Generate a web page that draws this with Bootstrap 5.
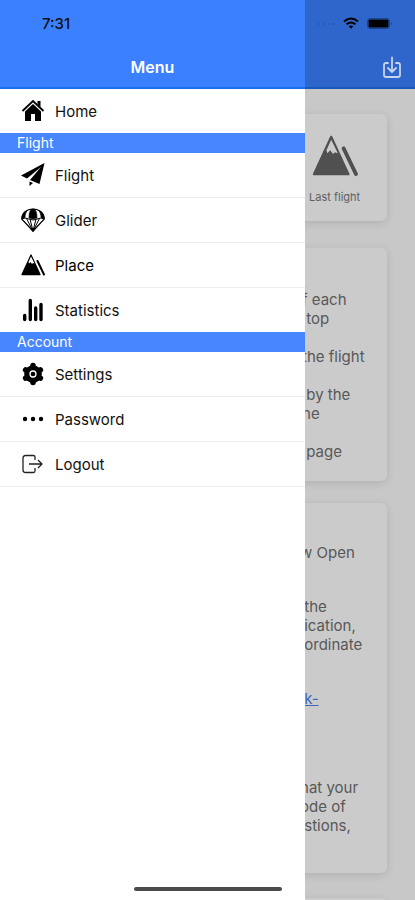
<!DOCTYPE html>
<html lang="en">
<head>
<meta charset="utf-8">
<meta name="viewport" content="width=device-width, initial-scale=1">
<title>Menu</title>
<link href="https://cdn.jsdelivr.net/npm/bootstrap@5.3.0/dist/css/bootstrap.min.css" rel="stylesheet">
<style>
  body { font-family: Inter, "Liberation Sans", sans-serif; font-size: 15px; line-height: 19px; color: #111; }
  .drawer { width: 73.5%; }
  .app-head { height: 89px; background: #3a80ff; border-bottom: 2px solid #1a6ff0; }
  .status { height: 46px; }
  .clock { padding-left: 42px; font-size: 15px; }
  .title { font-size: 16px; line-height: 42px; }
  .entry { height: 44px; padding-left: 21px; gap: 10px; color: #111; font-size: 15px; }
  .entry svg { width: 24px; height: 24px; }
  li + li { border-top: 1px solid #eee; }
  .ruled-end { border-bottom: 1px solid #eee; }
  .group { height: 20px; line-height: 20px; padding-left: 17px; font-size: 14px; background: #4886ff; }
  .behind { background: #c8c8c8; color: #585858; min-width: 0; }
  .behind .app-head { background: #2e66cb; border-color: #1958be; }
  .signals { padding-right: 22px; gap: 8px; }
  .save { padding: 9px 12px 0 0; }
  .stack { padding: 25px 28px 0 0; }
  .panel { margin-left: -16px; border-radius: 6px; background: #cbcbcb; box-shadow: 0 2px 8px rgba(0,0,0,.12); white-space: pre; }
  .tile { height: 107px; padding: 21px 0 0 20px; margin-bottom: 27px; font-size: 11px; color: #505050; }
  .tile svg { width: 46px; height: 42px; margin-left: 3px; }
  .tile span { margin-top: 11px; color: #606060; }
  .tips { padding: 42px 0 20px 13px; margin-bottom: 22px; }
  .news { padding: 40px 0 38px 11px; margin-bottom: 25px; }
  .behind a { color: #3f68bd; }
  .home-bar { width: 148px; height: 4px; bottom: 9px; background: #4b4b4b; }
</style>
<script src="https://cdn.jsdelivr.net/npm/bootstrap@5.3.0/dist/js/bootstrap.bundle.min.js"></script>
</head>
<body>
<svg class="d-none" aria-hidden="true">
  <symbol id="peaks" viewBox="0 0 48 44">
    <path d="M20 2 2 41h36z" fill="currentColor" stroke="currentColor" stroke-width="2.500" stroke-linejoin="round"/>
    <path d="m20 5-5 11 1 3 3-3 3 4 2-2 3 1z" fill="var(--snow)"/>
    <path d="M33 14 46 41" stroke="currentColor" stroke-width="4" stroke-linecap="round"/>
  </symbol>
</svg>
<div class="d-flex vh-100 overflow-hidden position-relative">
  <aside class="drawer bg-white flex-shrink-0">
    <header class="app-head">
      <div class="status clock d-flex align-items-center fw-medium">7:31</div>
      <h1 class="title text-white text-center fw-semibold m-0">Menu</h1>
    </header>
    <nav aria-label="Main">
      <a class="entry d-flex align-items-center text-decoration-none" href="#home">
        <svg viewBox="0 0 24 24"><path d="M1.5 12 12 2l10.500 10" fill="none" stroke="#000" stroke-width="1.800"/><path d="M16.500 2h3v6l-3-3zM12 5l8 7.500V22h-6v-7h-4v7H4v-9.500z"/></svg>
        Home
      </a>
      <h2 class="group text-white m-0 fw-normal">Flight</h2>
      <ul class="list-unstyled m-0">
        <li><a class="entry d-flex align-items-center text-decoration-none" href="#flight">
          <svg viewBox="0 0 24 24"><path d="M23.500 0 0 12.500l6 3L20 4 9 17l9.500 4zM8.500 18.500v4.500l3.500-3z"/></svg>
          Flight</a></li>
        <li><a class="entry d-flex align-items-center text-decoration-none" href="#glider">
          <svg viewBox="0 0 24 24" fill="none" stroke="#000"><path d="M.7 11C1 5 5.500 1 12 1s11 4 11.300 10L12 23z" fill="#fff" stroke-width="1.200"/><path d="M12 1C9 1 8 5 8 10l4 1 4-1c0-5-1-9-4-9zM6 2.500c-3 2-5 5-5 8l3-1c0-3 1-5 2-7zM18 2.500c3 2 5 5 5 8l-3-1c0-3-1-5-2-7z" fill="#000" stroke-width=".6"/><path d="M5.500 10.500 11 21M9 11l2.500 10M15 11l-2.500 10M18.500 10.500 13 21M1 11l3-1 4 1 4 1 4-1 4-1 3 1" stroke-width="1"/><path d="M9.500 20.500h5L12 23.500z" fill="#000"/></svg>
          Glider</a></li>
        <li><a class="entry d-flex align-items-center text-decoration-none text-black" href="#place">
          <svg style="--snow:#fff"><use href="#peaks"/></svg>
          Place</a></li>
        <li><a class="entry d-flex align-items-center text-decoration-none" href="#statistics">
          <svg viewBox="0 0 24 24" stroke="#000" stroke-width="3.400" stroke-linecap="round"><path d="M3.700 17.500v4M9.300 2.500v19M14.700 10v11.500M20 6.500v15"/></svg>
          Statistics</a></li>
      </ul>
      <h2 class="group text-white m-0 fw-normal">Account</h2>
      <ul class="list-unstyled m-0 ruled-end">
        <li><a class="entry d-flex align-items-center text-decoration-none" href="#settings">
          <svg viewBox="0 0 24 24"><circle cx="12" cy="12" r="8.800"/><path d="M12 3.500v17M4.600 7.800l14.800 8.400M4.600 16.200l14.800-8.400" stroke="#000" stroke-width="5.500" stroke-linecap="round"/><circle cx="12" cy="12" r="3" stroke="#fff" stroke-width="1.300"/></svg>
          Settings</a></li>
        <li><a class="entry d-flex align-items-center text-decoration-none" href="#password">
          <svg viewBox="0 0 24 24"><circle cx="4" cy="12" r="2.200"/><circle cx="12" cy="12" r="2.200"/><circle cx="20" cy="12" r="2.200"/></svg>
          Password</a></li>
        <li><a class="entry d-flex align-items-center text-decoration-none" href="#logout">
          <svg viewBox="0 0 24 24" fill="none" stroke="#222" stroke-width="1.300" stroke-linejoin="round"><path d="M14 8V5q0-1.500-1.500-1.500h-8Q2 3.500 2 6v12q0 2.500 2.500 2.500h8Q14 20.500 14 19v-3M8 12h12.500M17 8l4 4-4 4"/></svg>
          Logout</a></li>
      </ul>
    </nav>
  </aside>

  <div class="behind flex-fill overflow-hidden">
    <header class="app-head">
      <div class="status signals d-flex align-items-center justify-content-end">
        <svg width="20" height="4" viewBox="0 0 20 4" fill="#2857ae"><circle cx="4" cy="3" r="1"/><circle cx="9" cy="3" r="1"/><circle cx="14" cy="3" r="1"/><circle cx="19" cy="3" r="1"/></svg>
        <svg width="16" height="12" viewBox="0 0 16 12" fill="none" stroke="#000" stroke-width="2"><path d="M1 4.500q7-6 14 0M3.500 7.300q4.500-3.700 9 0"/><path d="m5.700 9.300 2.300 2.500 2.300-2.500q-2.300-1.700-4.600 0z" fill="#000" stroke="none"/></svg>
        <svg width="26" height="11" viewBox="0 0 26 11"><rect x=".5" y=".5" width="22" height="10" rx="2.500" fill="none" stroke="#1d448b"/><rect x="1.500" y="1.500" width="20" height="8" rx="1"/><path d="M24 3.500q2 2 0 4z" fill="#1d448b"/></svg>
      </div>
      <div class="save d-flex justify-content-end">
        <button class="btn p-0 border-0 lh-1" type="button" aria-label="Download">
          <svg width="22" height="24" viewBox="0 0 22 24" fill="none" stroke="#c8d3ec" stroke-width="1.800" stroke-linecap="round" stroke-linejoin="round"><path d="M7 8H5Q3 8 3 10v10q0 2 2 2h12q2 0 2-2V10q0-2-2-2h-2M11 2.500v14M7 13l4 4 4-4"/></svg>
        </button>
      </div>
    </header>
    <main class="stack">
      <section class="panel tile d-flex flex-column align-items-start"><svg style="--snow:#cbcbcb"><use href="#peaks"/></svg><span>Last flight</span></section>
      <section class="panel tips"><p class="m-0">f each
 top

the flight

 by the
ne

 page</p></section>
      <section class="panel news"><p>w Open
 </p><p> the
 ication,
 ordinate
 </p><p> <a href="#link">k-</a>
 </p><p> </p><p class="m-0">hat your
ode of
 stions,</p></section>
      <section class="panel tile"></section>
    </main>
  </div>
  <div class="home-bar position-absolute start-50 translate-middle-x rounded-pill"></div>
</div>
</body>
</html>
